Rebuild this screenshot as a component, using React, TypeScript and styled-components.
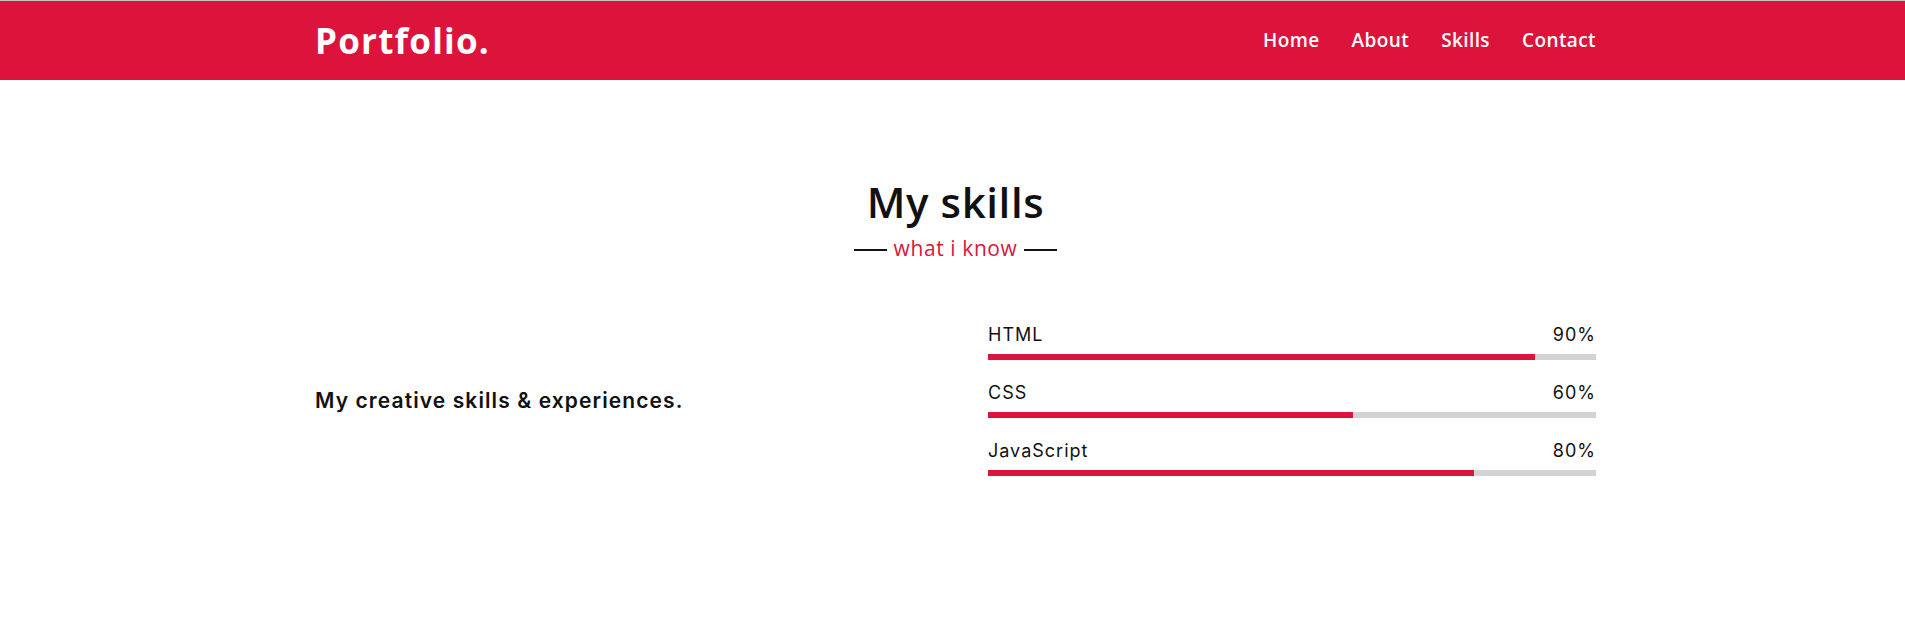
import React from "react";
import styled, { createGlobalStyle } from "styled-components";

const GlobalStyle = createGlobalStyle`
  * { box-sizing: border-box; margin: 0; padding: 0; }
  html, body { margin: 0; background: #fff; }
  body { font-family: "Open Sans", "Noto Sans", sans-serif; color: #111; }
  a { text-decoration: none; }
  ul { list-style: none; }
`;

const CRIMSON = "#dc143c";

const Page = styled.div`
  width: 100%;
  padding-left: 6px;
`;

const NavBar = styled.nav`
  margin-left: -6px;
  padding-left: 6px;
  height: 80px;
  background: ${CRIMSON};
  border-top: 1px solid #c4c4c4;
`;

const Container = styled.div`
  max-width: 1281px;
  margin: 0 auto;
`;

const NavInner = styled(Container)`
  height: 100%;
  display: flex;
  align-items: center;
  justify-content: space-between;
`;

const Logo = styled.a`
  font-family: "Open Sans", sans-serif;
  font-size: 35px;
  font-weight: 700;
  color: #fff;
  letter-spacing: 1.2px;
  line-height: 1;
  margin-top: -1px;
`;

const Menu = styled.ul`
  display: flex;
  gap: 32px;
  margin-top: -1px;
`;

const MenuLink = styled.a`
  font-family: "Open Sans", sans-serif;
  font-size: 19px;
  font-weight: 600;
  color: #fff;
  letter-spacing: 0.4px;
`;

const Section = styled.section`
  padding-top: 97px;
`;

const Title = styled.h2`
  text-align: center;
  font-family: "Open Sans", sans-serif;
  font-size: 42px;
  line-height: 50px;
  font-weight: 600;
  color: #111;
  letter-spacing: 0.6px;
`;

const SubTitle = styled.div`
  display: flex;
  justify-content: center;
  align-items: center;
  gap: 7px;
  margin-top: 9px;
`;

const Dash = styled.span`
  width: 33px;
  height: 2px;
  background: #111;
  margin-top: 3px;
`;

const SubText = styled.span`
  font-family: "Open Sans", sans-serif;
  font-size: 21px;
  line-height: 24px;
  color: ${CRIMSON};
  letter-spacing: 0.6px;
`;

const SkillsContent = styled(Container)`
  display: grid;
  grid-template-columns: 1fr 608px;
  align-items: center;
  margin-top: 61px;
`;

const LeadText = styled.p`
  font-family: "Inter", sans-serif;
  font-size: 21px;
  font-weight: 600;
  color: #111;
  letter-spacing: 1.1px;
  margin-top: 4px;
`;

const Bars = styled.div`
  display: flex;
  flex-direction: column;
  gap: 19px;
`;

const Info = styled.div`
  display: flex;
  justify-content: space-between;
  font-family: "Inter", sans-serif;
  font-size: 18px;
  line-height: 27px;
  font-weight: 400;
  color: #111;
  letter-spacing: 1px;
  margin-bottom: 6px;
`;

const Track = styled.div`
  height: 6px;
  width: 100%;
  background: #d3d3d3;
`;

const Fill = styled.div`
  height: 100%;
  background: ${CRIMSON};
`;

const skills = [
  { name: "HTML", pct: 90 },
  { name: "CSS", pct: 60 },
  { name: "JavaScript", pct: 80 },
];

export default function App() {
  return (
    <Page>
      <GlobalStyle />
      <NavBar>
        <NavInner>
          <Logo href="#">Portfolio.</Logo>
          <Menu>
            {["Home", "About", "Skills", "Contact"].map((m) => (
              <li key={m}>
                <MenuLink href="#">{m}</MenuLink>
              </li>
            ))}
          </Menu>
        </NavInner>
      </NavBar>
      <Section>
        <Title>My skills</Title>
        <SubTitle>
          <Dash />
          <SubText>what i know</SubText>
          <Dash />
        </SubTitle>
        <SkillsContent>
          <LeadText>My creative skills &amp; experiences.</LeadText>
          <Bars>
            {skills.map((s) => (
              <div key={s.name}>
                <Info>
                  <span>{s.name}</span>
                  <span>{s.pct}%</span>
                </Info>
                <Track>
                  <Fill style={{ width: `${s.pct}%` }} />
                </Track>
              </div>
            ))}
          </Bars>
        </SkillsContent>
      </Section>
    </Page>
  );
}
